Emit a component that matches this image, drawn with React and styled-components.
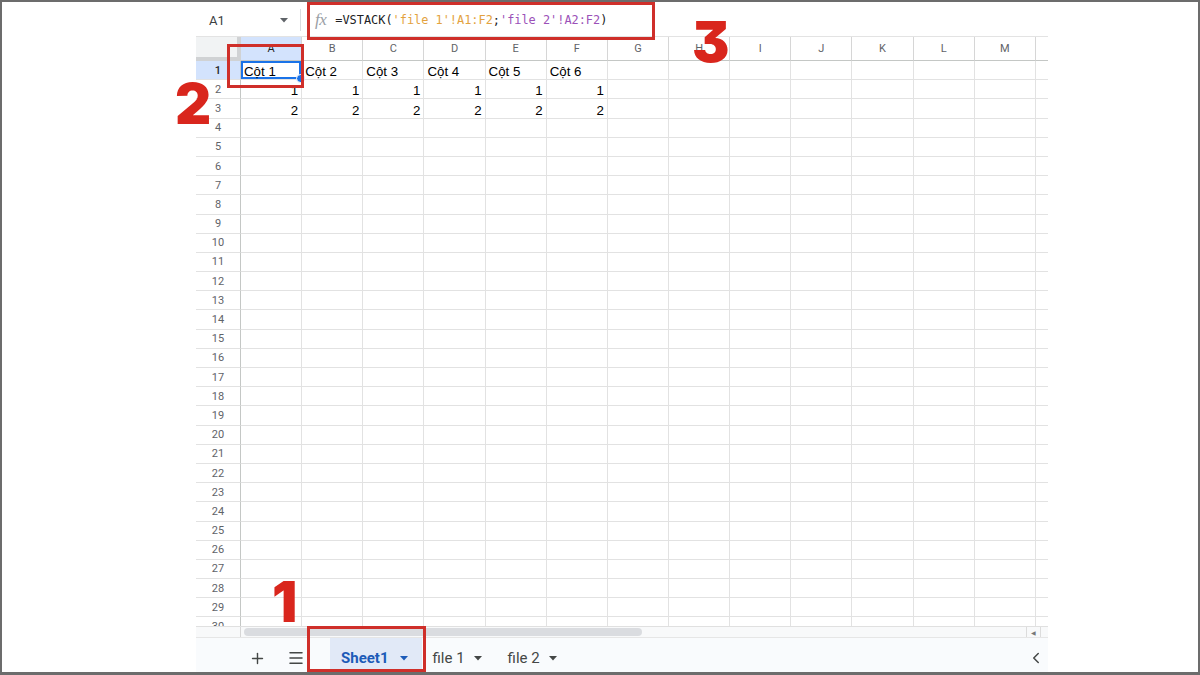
import React from "react";
import styled, { createGlobalStyle } from "styled-components";
import { Plus, Menu, ChevronLeft } from "lucide-react";

const GlobalStyle = createGlobalStyle`
  html, body {
    margin: 0;
    padding: 0;
    background: #fff;
    font-family: Roboto, "Liberation Sans", Arial, sans-serif;
  }
  * {
    box-sizing: border-box;
  }
`;

const COL_W = 61.15;
const ROW_H = 19.2;
const COLS = "ABCDEFGHIJKLM".split("");
const ROW_COUNT = 30;
const DATA = {
  1: ["Cột 1", "Cột 2", "Cột 3", "Cột 4", "Cột 5", "Cột 6"],
  2: [1, 1, 1, 1, 1, 1],
  3: [2, 2, 2, 2, 2, 2],
};

// Frame around the whole screenshot
const Frame = styled.div`
  position: relative;
  width: 1200px;
  height: 675px;
  border: 2px solid #6c6c6c;
  border-bottom-width: 3px;
  padding-left: 194px;
  overflow: hidden;
  background: #fff;
`;

const Sheet = styled.div`
  width: 852px;
  height: 100%;
  display: flex;
  flex-direction: column;
  background: #fff;
`;

// Formula bar
const Toolbar = styled.div`
  height: 35px;
  flex: 0 0 35px;
  display: flex;
  align-items: center;
  padding-top: 2px;
  border-bottom: 1px solid #e3e3e3;
`;

const NameBox = styled.div`
  width: 104px;
  display: flex;
  align-items: center;
  justify-content: space-between;
  padding: 0 12px 0 13px;
  font-size: 13px;
  color: #3c4043;
`;

const Divider = styled.div`
  width: 1px;
  height: 22px;
  background: #dadce0;
`;

const Fx = styled.span`
  margin-left: 14px;
  font-family: "Liberation Serif", "DejaVu Serif", serif;
  font-style: italic;
  font-size: 17px;
  color: #9aa0a6;
  letter-spacing: -0.5px;
`;

const Formula = styled.div`
  margin-left: 9px;
  font-family: "DejaVu Sans Mono", "Liberation Mono", monospace;
  font-size: 11.9px;
  color: #202124;
  white-space: pre;
`;

const Ref = styled.span`
  color: ${(p) => p.$color};
`;

// Grid
const Grid = styled.div`
  flex: 1;
  overflow: hidden;
  display: flex;
  flex-direction: column;
`;

const Row = styled.div`
  display: flex;
  flex: 0 0 ${(p) => (p.$header ? "24px" : `${ROW_H}px`)};
  height: ${(p) => (p.$header ? "24px" : `${ROW_H}px`)};
`;

const Corner = styled.div`
  flex: 0 0 45px;
  background: #f1f3f4;
  border-right: 4px solid #d0d2d4;
  border-bottom: 4px solid #d0d2d4;
`;

const ColHead = styled.div`
  flex: 0 0 ${COL_W}px;
  display: flex;
  align-items: center;
  justify-content: center;
  font-size: 11px;
  color: ${(p) => (p.$active ? "#1f1f1f" : "#5f6368")};
  background: ${(p) => (p.$active ? "#d3e3fd" : "#fff")};
  border-right: 1px solid #d6d6d6;
  border-bottom: 1px solid #c4c7c5;
`;

const ColTail = styled.div`
  flex: 1;
  border-bottom: 1px solid #c4c7c5;
`;

const RowHead = styled.div`
  flex: 0 0 45px;
  display: flex;
  align-items: center;
  justify-content: center;
  font-size: 11px;
  color: ${(p) => (p.$active ? "#1f1f1f" : "#5f6368")};
  font-weight: ${(p) => (p.$active ? 500 : 400)};
  background: ${(p) => (p.$active ? "#d3e3fd" : "#fff")};
  border-right: 1px solid #c4c7c5;
  border-bottom: 1px solid #e2e2e2;
`;

const Cell = styled.div`
  position: relative;
  flex: 0 0 ${COL_W}px;
  display: flex;
  align-items: flex-end;
  justify-content: ${(p) => (p.$num ? "flex-end" : "flex-start")};
  padding: 0 3px 0;
  font-family: "Liberation Sans", Arial, sans-serif;
  font-size: 13.3px;
  line-height: 14px;
  color: #000;
  border-right: 1px solid #e2e2e2;
  border-bottom: 1px solid #e2e2e2;
  ${(p) =>
    p.$selected &&
    `
    box-shadow: inset 0 0 0 2px #1a73e8;
    &::after {
      content: "";
      position: absolute;
      right: -4px;
      bottom: -4px;
      width: 7px;
      height: 7px;
      border-radius: 50%;
      background: #1a73e8;
      border: 1px solid #fff;
      z-index: 2;
    }
  `}
`;

const CellTail = styled.div`
  flex: 1;
  border-bottom: 1px solid #e2e2e2;
`;

// Horizontal scrollbar
const Scroll = styled.div`
  flex: 0 0 12px;
  display: flex;
  background: #f8f9fa;
  border-top: 1px solid #e0e0e0;
  border-bottom: 1px solid #e6e6e6;
`;

const ScrollCorner = styled.div`
  flex: 0 0 45px;
  border-right: 1px solid #d6d6d6;
`;

const Track = styled.div`
  flex: 1;
  display: flex;
  align-items: center;
  padding-left: 3px;
`;

const Thumb = styled.div`
  width: 398px;
  height: 8px;
  border-radius: 4px;
  background: #dadce0;
`;

const ScrollBtn = styled.div`
  flex: 0 0 ${(p) => p.$w}px;
  display: flex;
  align-items: center;
  justify-content: center;
  border-left: 1px solid #dcdcdc;
  font-size: 6px;
  color: #777;
`;

// Sheet tabs
const Tabs = styled.div`
  flex: 0 0 34px;
  display: flex;
  align-items: stretch;
  background: #f9fbfd;
  padding-left: 47px;
`;

const IconBtn = styled.div`
  width: 28px;
  margin-left: ${(p) => p.$ml || 0}px;
  padding-top: 6px;
  display: flex;
  align-items: center;
  justify-content: center;
  color: #444746;
`;

const Tab = styled.div`
  display: flex;
  align-items: center;
  gap: ${(p) => (p.$active ? 11 : 9)}px;
  margin-left: ${(p) => p.$ml || 0}px;
  padding: 6px ${(p) => (p.$active ? 14 : 15)}px 0 11px;
  background: ${(p) => (p.$active ? "#e1e9f7" : "transparent")};
  color: ${(p) => (p.$active ? "#1c5bb8" : "#444746")};
  font-weight: ${(p) => (p.$active ? 700 : 400)};
  font-size: 15px;
`;

const Spacer = styled.div`
  flex: 1;
`;

const Chevron = styled.div`
  display: flex;
  align-items: center;
  padding: 6px 3px 0 0;
  color: #444746;
`;

// Red annotation overlays
const Mark = styled.div`
  position: absolute;
  left: ${(p) => p.$x}px;
  top: ${(p) => p.$y}px;
  width: ${(p) => p.$w}px;
  height: ${(p) => p.$h}px;
  border: 3px solid #cf2f2a;
  pointer-events: none;
  z-index: 5;
`;

const Step = styled.div`
  position: absolute;
  left: ${(p) => p.$x}px;
  top: ${(p) => p.$y}px;
  font-family: Inter, "DejaVu Sans", sans-serif;
  font-weight: 900;
  font-size: 56px;
  line-height: 1;
  color: #d9261d;
  font-feature-settings: "cv09";
  z-index: 6;
`;

const Caret = ({ color = "#444746" }) => (
  <svg width="8" height="5" viewBox="0 0 8 5">
    <path d="M0 0h8L4 4.5z" fill={color} />
  </svg>
);

const App = () => {
  const rows = Array.from({ length: ROW_COUNT }, (_, i) => i + 1);
  return (
    <>
      <GlobalStyle />
      <Frame>
        <Sheet>
          <Toolbar>
            <NameBox>
              <span>A1</span>
              <Caret color="#5f6368" />
            </NameBox>
            <Divider />
            <Fx>fx</Fx>
            <Formula>
              =VSTACK(<Ref $color="#e3a23e">'file 1'!A1:F2</Ref>;
              <Ref $color="#9b51b8">'file 2'!A2:F2</Ref>)
            </Formula>
          </Toolbar>

          <Grid>
            <Row $header>
              <Corner />
              {COLS.map((c) => (
                <ColHead key={c} $active={c === "A"}>
                  {c}
                </ColHead>
              ))}
              <ColTail />
            </Row>
            {rows.map((r) => (
              <Row key={r}>
                <RowHead $active={r === 1}>{r}</RowHead>
                {COLS.map((c, ci) => {
                  const v = DATA[r] ? DATA[r][ci] : undefined;
                  return (
                    <Cell
                      key={c}
                      $num={typeof v === "number"}
                      $selected={r === 1 && ci === 0}
                    >
                      {v}
                    </Cell>
                  );
                })}
                <CellTail />
              </Row>
            ))}
          </Grid>

          <Scroll>
            <ScrollCorner />
            <Track>
              <Thumb />
            </Track>
            <ScrollBtn $w={14}>◀</ScrollBtn>
            <ScrollBtn $w={8} />
          </Scroll>

          <Tabs>
            <IconBtn>
              <Plus size={17} strokeWidth={2} />
            </IconBtn>
            <IconBtn $ml={11}>
              <Menu size={18} strokeWidth={2} />
            </IconBtn>
            <Tab $active $ml={20}>
              Sheet1
              <Caret color="#1c5bb8" />
            </Tab>
            <Tab>
              file 1
              <Caret />
            </Tab>
            <Tab>
              file 2
              <Caret />
            </Tab>
            <Spacer />
            <Chevron>
              <ChevronLeft size={18} strokeWidth={2} />
            </Chevron>
          </Tabs>
        </Sheet>

        <Mark $x={305} $y={0} $w={348} $h={38} />
        <Mark $x={225} $y={42} $w={77} $h={44} />
        <Mark $x={305} $y={624} $w={119} $h={46} />

        <Step $x={690} $y={12}>3</Step>
        <Step $x={173} $y={74}>2</Step>
        <Step $x={270} $y={572}>1</Step>
      </Frame>
    </>
  );
};

export default App;
